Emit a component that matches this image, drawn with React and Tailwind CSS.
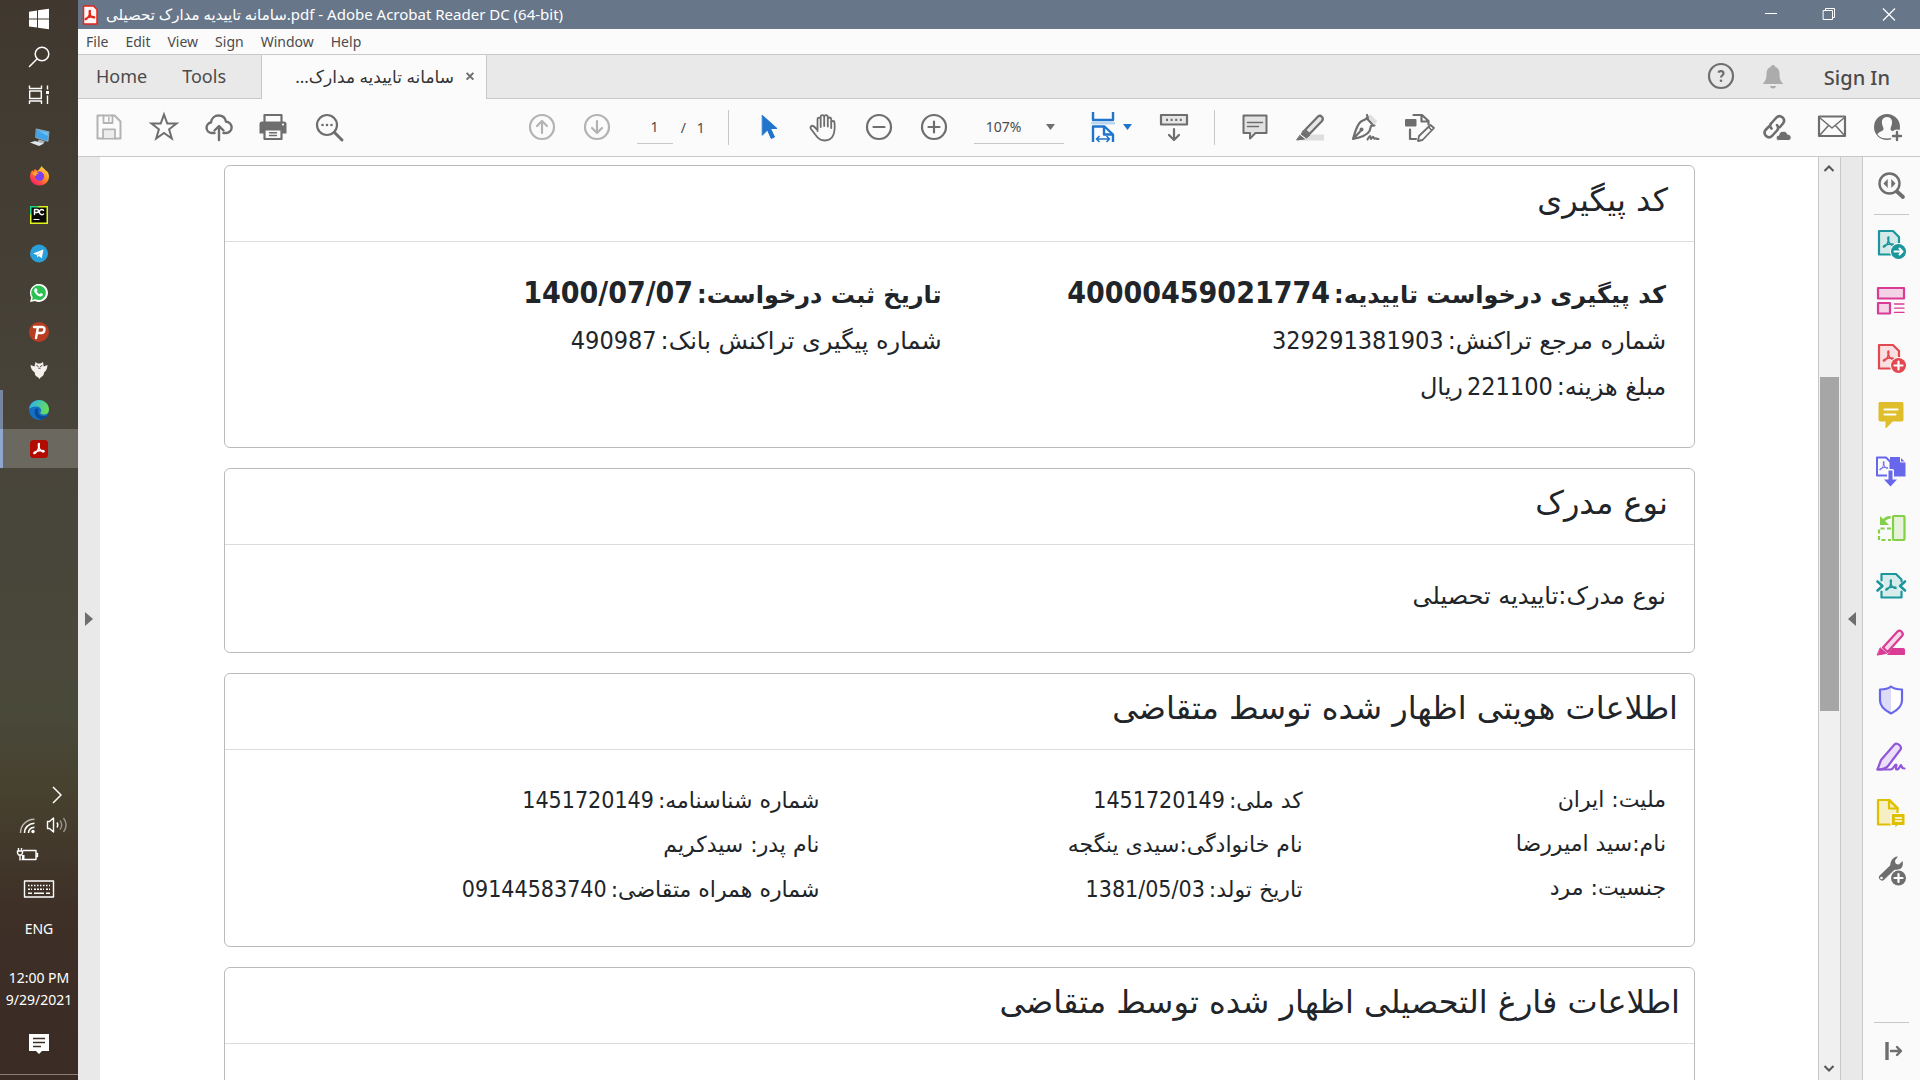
import React from "react";

const UI = "font-['Noto_Sans','DejaVu_Sans',sans-serif]";
const DOC = "font-['DejaVu_Sans',sans-serif]";

function Icon({ children, size = 32, className = "", ...rest }) {
  return (
    <svg
      width={size}
      height={size}
      viewBox="0 0 32 32"
      fill="none"
      stroke="currentColor"
      strokeWidth="2"
      strokeLinecap="round"
      strokeLinejoin="round"
      aria-hidden="true"
      className={"block shrink-0 " + className}
      {...rest}
    >
      {children}
    </svg>
  );
}

const Trefoil = ({ x = 0, y = 0, s = 1, color = "currentColor", w = 1.3 }) => (
  <path
    transform={`translate(${x} ${y}) scale(${s})`}
    d="M6 1c-.6 0-.9 1-.5 2.6C5.9 5.400 4.300 8.600 2.700 10.300c-1 1-2 1-1.900.3.200-.9 2.800-1.900 5.200-2.400 2-.4 5-.3 5.200.5.200.7-1.200.8-2.400.1C7 7.700 5.900 5.500 6.200 3.200 6.400 1.900 6.500 1 6 1z"
    stroke={color}
    strokeWidth={w}
    fill="none"
  />
);

/* ---------- taskbar ---------- */

const taskbarApps = [
  { name: "Start", icon: (
    <Icon stroke="none" fill="#fff">
      <path d="M6 7.700l8-1.200v8H6zM15 6.300L26 4.700v9.800H15zM6 15.600h8v8l-8-1.200zM15 15.600h11v9.700l-11-1.600z" />
    </Icon>
  ) },
  { name: "Search", icon: (
    <Icon stroke="#fff" strokeWidth="1.500">
      <circle cx="19" cy="11" r="6.800" />
      <path d="M14 16l-7.500 7.500" />
    </Icon>
  ) },
  { name: "Task View", icon: (
    <Icon stroke="#fff" strokeWidth="1.400" strokeLinecap="butt">
      <path d="M6.500 3.500v3h12v-3M6.500 22v-3h12v3M6.700 9h11.600v7.500H6.700zM24.500 3.500v4M24.500 13.500v8.500" />
      <rect x="23" y="9" width="3" height="3" fill="#fff" stroke="none" />
    </Icon>
  ) },
  { name: "This PC", icon: (
    <Icon stroke="none">
      <path d="M13.500 8L26 10.800l-1 9.600-12-3.800z" fill="#3fa5ea" stroke="#9fb3c2" strokeWidth=".8" />
      <path d="M14.500 9.200l10.500 2.300-.4 3.500z" fill="#6cc0f5" />
      <path d="M16 18.500l6 2-2 2-5.500-1.700z" fill="#aab6bd" />
      <path d="M7 21.500l5-1.500 9 2.500-5 2.500z" fill="#dfe7eb" />
    </Icon>
  ) },
  { name: "Firefox", icon: (
    <Icon stroke="none">
      <defs>
        <linearGradient id="ff" x1="24" y1="7" x2="9" y2="25" gradientUnits="userSpaceOnUse">
          <stop offset="0" stopColor="#ffe14a" />
          <stop offset=".45" stopColor="#ff8a24" />
          <stop offset=".8" stopColor="#ff3750" />
          <stop offset="1" stopColor="#e5188a" />
        </linearGradient>
      </defs>
      <path d="M18.500 6c1 2 3 2.700 4.200 4.500C25 11.500 26 14 26 16.500c0 5-4 9-9.500 9S7 21.500 7 16.500c0-3 1-5 2.500-6.500l.5 1.500c1-.6 1.600-1.700 1.800-2.500 1 .8 1.700 1.500 2.700 2 1.500-1.500 3-3 4-5z" fill="url(#ff)" />
      <circle cx="16.500" cy="16.200" r="4.600" fill="#7a3ff0" />
      <path d="M9.500 12.500c2-1 5-.5 6.500 1-1.800.2-2.700 1-3 2.500-2-.3-3.500-1.500-3.500-3.500z" fill="#ffa52b" />
    </Icon>
  ) },
  { name: "PyCharm", icon: (
    <Icon stroke="none">
      <rect x="7" y="7" width="18" height="18" fill="#dff41b" />
      <path d="M7 7h9l-9 9z" fill="#21d789" />
      <rect x="8.500" y="8.500" width="15" height="15" fill="#0a0a0a" />
      <path d="M11.500 15.500v-5H14a1.500 1.500 0 010 3h-2.500M20.500 11.200a2.500 2.500 0 100 3.700" stroke="#fff" strokeWidth="1.400" />
      <path d="M11 20.500h5" stroke="#fff" strokeWidth="1.200" />
    </Icon>
  ) },
  { name: "Telegram", icon: (
    <Icon stroke="none">
      <circle cx="16" cy="15.500" r="9" fill="#2a9fda" />
      <path d="M10 15.500l10.500-4-1.700 8.700-3-2.200-1.500 1.500-.4-2.500z" fill="#fff" />
      <path d="M14 17l4.500-3.500-3.500 4z" fill="#a9c9dd" />
    </Icon>
  ) },
  { name: "WhatsApp", icon: (
    <Icon stroke="none">
      <path d="M7 25l1.200-4.500A9 9 0 1112 24z" fill="#fff" />
      <path d="M9 23l.8-2.700A7.300 7.300 0 1112.200 22.300z" fill="#2bc052" />
      <path d="M12.500 11.200l1.300.2.8 2-.9 1.200c.7 1.300 1.700 2.100 3 2.700l1.200-1.200 2 1c.2 1.300-1 2.500-2.500 2.400-3.300-.5-6-3.500-6.200-6 0-1 .6-2 1.300-2.300z" fill="#fff" />
    </Icon>
  ) },
  { name: "Psiphon", icon: (
    <Icon stroke="none">
      <circle cx="16" cy="16" r="10" fill="#b93d22" />
      <path d="M11 11h8.500c3 0 2.500 6-1 6H15M15 11l-2 11" stroke="#fff" strokeWidth="2.400" />
    </Icon>
  ) },
  { name: "Owl", icon: (
    <Icon stroke="none">
      <path d="M12.500 7l2 1.500h3L20 7l.7 4.500L24.500 10c-.2 3.500-1 5.500-3.500 7.500.2 2.500-1.500 4-3.200 4.700L16.500 24l-1.500-1.800c-2-.7-3.500-2.200-3.200-4.700C9 15.500 7.700 13.500 7.500 10l4 1.500z" fill="#f4f1ec" />
      <path d="M13.700 10.500l1.500 1M19 10.500l-1.500 1M15.700 13.200h1.500" stroke="#48443a" strokeWidth="1" />
    </Icon>
  ) },
  { name: "Edge", running: true, icon: (
    <Icon stroke="none">
      <defs>
        <linearGradient id="edgeTop" x1="8" y1="8" x2="26" y2="16" gradientUnits="userSpaceOnUse">
          <stop offset="0" stopColor="#2fb4e8" />
          <stop offset="1" stopColor="#6de04a" />
        </linearGradient>
      </defs>
      <circle cx="16" cy="16" r="10" fill="#1370c4" />
      <path d="M6 15C6.700 9.500 11 6 16 6c6 0 10 4.500 10 9.500 0 3-2.300 5-5.200 5-2.600 0-4-1-3.300-2 1.400-1.800.7-5.500-3.500-6-3.500-.4-6.500 1-8 2.500z" fill="url(#edgeTop)" />
      <path d="M12.500 15c-2 3-1 8.500 5.500 10.500 3-.5 5.300-2 6.700-4.200-3 1.500-8.700 1.500-9.700-2.800-.3-1.500.2-2.500.7-3.200-1-.9-2.200-1-3.200-.3z" fill="#0b4a96" />
    </Icon>
  ) },
  { name: "Adobe Acrobat Reader", active: true, icon: (
    <Icon stroke="none">
      <rect x="7" y="7" width="18" height="18" rx="3.500" fill="#b30b00" />
      <Trefoil x={10} y={9.5} color="#fff" w={1.4} />
    </Icon>
  ) },
];

function Taskbar() {
  return (
    <aside className="flex w-[78px] shrink-0 flex-col bg-[linear-gradient(180deg,#40382e_0%,#48443a_40%,#49493a_66%,#47412f_73%,#3e3027_84%,#3a2c25_100%)] text-white">
      <nav aria-label="Taskbar" className="flex flex-col">
        {taskbarApps.map((a) => (
          <button
            key={a.name}
            aria-label={a.name}
            className={
              "flex h-[39px] items-center justify-center border-l-[3px] pr-[3px] " +
              (a.active
                ? "border-[#8fa7cf] bg-[#6b685f]"
                : a.running
                ? "border-[#76869f]"
                : "border-transparent")
            }
          >
            {a.icon}
          </button>
        ))}
      </nav>
      <div className="mt-auto flex flex-col items-center">
        <div className="flex h-[30px] w-full items-center justify-end pr-[5px]">
          <button aria-label="Show hidden icons">
            <Icon stroke="#fff" strokeWidth="1.500" strokeLinecap="butt"><path d="M12 8l8 8-8 8" /></Icon>
          </button>
        </div>
        <div className="flex h-[30px] w-full items-center pl-[11px]">
          <button aria-label="Network">
            <Icon stroke="#fff" strokeWidth="1.500" strokeLinecap="butt">
              <circle cx="22" cy="22.500" r="1.700" fill="#fff" stroke="none" />
              <path d="M17.500 24c0-3.500 2.500-5.500 6-5.800M13.500 24c0-5.500 4.500-9.500 10-9.700" />
              <path d="M9.500 24c0-8 6-13.500 14-13.700" stroke="#bdbab2" />
            </Icon>
          </button>
          <button aria-label="Volume" className="-ml-[3px]">
            <Icon stroke="#fff" strokeWidth="1.400" strokeLinecap="butt">
              <path d="M7.500 12.500h2l4-3.500v14l-4-3.500h-2z" />
              <path d="M17 13.500c1 1.500 1 3.500 0 5" />
              <path d="M20 11.500c2.300 3 2.300 6 0 9M23.500 9c3.300 4.500 3.300 9.500 0 14" stroke="#99958c" />
            </Icon>
          </button>
        </div>
        <div className="flex h-[30px] w-full items-center pl-[11px]">
          <Icon stroke="#fff" strokeWidth="1.400" strokeLinecap="butt">
            <path d="M12 11.500h13v9H10.500M25 14.500h1.500v3H25" />
            <path d="M7.500 9v3M10.500 9v3M6.500 12h5v2l-1 2h-3l-1-2zM9 16v5.500" />
            <rect x="11" y="16" width="2.500" height="4" fill="#fff" stroke="none" />
          </Icon>
        </div>
        <button aria-label="Touch keyboard" className="flex h-[38px] items-center">
          <Icon stroke="#fff" strokeWidth="1.400" strokeLinecap="butt">
            <rect x="1.500" y="8" width="29" height="16" />
            <path d="M5 12.500h22" strokeDasharray="1.500 1.500" />
            <path d="M5 16.300h4M11 16.300h10M23 16.300h4" strokeDasharray="2 1" />
            <path d="M5 20.200h4M11 20.200h10M23 20.200h4" />
          </Icon>
        </button>
        <button className={UI + " h-[42px] text-[14px] leading-[20px]"}>ENG</button>
        <div className={UI + " mt-[17px] text-center text-[14px] leading-[22px] whitespace-nowrap"}>
          <div>12:00 PM</div>
          <div>9/29/2021</div>
        </div>
        <button aria-label="Notifications" className="mt-[17px] mb-[14px]">
          <Icon stroke="none">
            <path d="M6 6h20v17h-7l-3 3-3-3H6z" fill="#fff" />
            <path d="M10 10.500h12M10 14.500h12M10 18.500h8" stroke="#3b2d26" strokeWidth="1.300" strokeLinecap="butt" />
          </Icon>
        </button>
        <div className="mb-[5px] h-px w-full bg-[#8a807b]" />
      </div>
    </aside>
  );
}

/* ---------- window chrome ---------- */

function TitleBar() {
  return (
    <header className={UI + " flex h-[29px] items-center bg-[#68768a] pl-1 text-[15px] text-white"}>
      <Icon size={16} stroke="none" viewBox="0 0 16 20" className="h-5">
        <path d="M1.500 1h10L15 4.500V19H1.500z" fill="#fff5f4" stroke="#e1251b" strokeWidth="1.500" />
        <Trefoil x={2.5} y={4.5} s={0.9} color="#e1251b" w={1.700} />
      </Icon>
      <h1 className="ml-2 whitespace-nowrap">
        سامانه تاییدیه مدارک تحصیلی.pdf - Adobe Acrobat Reader DC (64-bit)
      </h1>
      <div className="ml-auto flex">
        <button aria-label="Minimize" className="flex w-[58px] justify-center">
          <Icon stroke="#fff" strokeWidth="1" strokeLinecap="butt"><path d="M10 14.500h12" /></Icon>
        </button>
        <button aria-label="Restore" className="flex w-[58px] justify-center">
          <Icon stroke="#fff" strokeWidth="1" strokeLinejoin="miter"><path d="M10.500 11.500h9v9h-9zM12.500 11v-1.500h9v9H20" /></Icon>
        </button>
        <button aria-label="Close" className="flex w-[62px] justify-center">
          <Icon stroke="#fff" strokeWidth="1.200" strokeLinecap="butt"><path d="M10 9.500l12 12M22 9.500l-12 12" /></Icon>
        </button>
      </div>
    </header>
  );
}

function MenuBar() {
  return (
    <nav className={UI + " flex h-[26px] items-center gap-[17px] border-b border-[#c8c8c8] bg-[#fbfbfb] pl-2 text-[14px] text-[#4b4b4b]"}>
      {["File", "Edit", "View", "Sign", "Window", "Help"].map((m) => (
        <button key={m}>{m}</button>
      ))}
    </nav>
  );
}

function TabBar() {
  return (
    <div className={UI + " flex h-11 bg-[#e9e9e9] text-[18px] text-[#4b4b4b]"}>
      <div className="flex w-[183px] items-center gap-[35px] border-b border-[#c8c8c8] pl-[18px]">
        <button>Home</button>
        <button>Tools</button>
      </div>
      <div className="flex w-[226px] items-center justify-end border-x border-[#c8c8c8] bg-[#fbfbfb] pr-1">
        <span dir="rtl" className="text-[17px] whitespace-nowrap text-[#333]">سامانه تاییدیه مدارک...</span>
        <button aria-label="Close tab" className="ml-1">
          <Icon size={24} stroke="#6e6e6e" strokeWidth="2.700" strokeLinecap="butt"><path d="M11.500 10.500l9 9M20.500 10.500l-9 9" /></Icon>
        </button>
      </div>
      <div className="flex flex-1 items-center justify-end border-b border-[#c8c8c8] pr-[30px]">
        <button aria-label="Help" className="mr-[20px]">
          <Icon stroke="#6e6e6e" strokeWidth="2.200">
            <circle cx="16" cy="15" r="12" />
            <path d="M13.300 11.600c.6-2 5.200-2 5.200.8 0 1.800-2.500 1.900-2.500 4.200" strokeLinecap="butt" />
            <circle cx="16" cy="19.800" r="1.300" fill="#6e6e6e" stroke="none" />
          </Icon>
        </button>
        <button aria-label="Notifications" className="mr-[35px]">
          <Icon stroke="none">
            <path d="M16 4c1.300 0 2 .7 2 1.800 3 1 4.500 3.500 4.500 6.700 0 5 .8 7.500 4 10.500h-21c3.200-3 4-5.500 4-10.500 0-3.200 1.500-5.700 4.500-6.700 0-1.100.7-1.800 2-1.800z" fill="#acacac" />
            <path d="M13 25h6c-.5 1.800-1.500 2.500-3 2.500s-2.500-.7-3-2.500z" fill="#acacac" />
          </Icon>
        </button>
        <button className="pt-0.5 text-[20px] font-medium">Sign In</button>
      </div>
    </div>
  );
}

function ToolButton({ label, children, className = "" }) {
  return (
    <button aria-label={label} className={"flex w-[55px] shrink-0 justify-center text-[#6e6e6e] " + className}>
      <Icon>{children}</Icon>
    </button>
  );
}

const Divider = () => <div className="h-[35px] w-px shrink-0 bg-[#c8c8c8]" />;

function Toolbar() {
  return (
    <div className={UI + " flex h-[58px] items-center border-b border-[#c8c8c8] bg-[#fbfbfb] pb-px pl-[3px] text-[14px] text-[#4b4b4b]"}>
      <ToolButton label="Save">
        <g stroke="#b3b3b3">
          <path d="M4.500 4.500h17l6 6v17h-23z" />
          <path d="M10.500 4.500v7.500h9V4.500M10 27.500v-9h12v9" strokeWidth="1.800" />
          <path d="M15.800 6.500v3.500" strokeWidth="1.500" />
          <path d="M11 19.500h10v7.500H11z" fill="#ececec" stroke="none" />
        </g>
      </ToolButton>
      <ToolButton label="Add to favourites">
        <path d="M16 3.500l3.300 9h9.200l-7.400 5.800 2.700 9.200L16 22l-7.800 5.500 2.700-9.200-7.400-5.800h9.200z" strokeLinejoin="miter" />
      </ToolButton>
      <ToolButton label="Upload">
        <path d="M11.500 22H8.500a5.300 5.300 0 01-.6-10.500C8.500 7 12 4.500 15.500 4.500c4 0 6.800 2.500 7.600 6.300A5.600 5.600 0 0123 22h-2.500" strokeWidth="2.400" />
        <path d="M16 29V15.500M11.500 19.500L16 15l4.500 4.500" strokeWidth="2.400" />
      </ToolButton>
      <ToolButton label="Print">
        <path d="M6.500 11V4h17v7" strokeWidth="2.200" />
        <path d="M1.500 13c0-1.500 1-2.500 2.500-2.500h22c1.500 0 2.500 1 2.500 2.500v9.500h-5V18h-17v4.500h-5z" fill="currentColor" stroke="none" />
        <path d="M6.500 18.500h17v9.500h-17z" fill="#fbfbfb" strokeWidth="2.200" />
        <path d="M11.500 21.800h7M11.500 24.500h7" strokeWidth="1.400" />
        <circle cx="25" cy="13.500" r="1.100" fill="#fbfbfb" stroke="none" />
      </ToolButton>
      <ToolButton label="Find">
        <circle cx="14" cy="14" r="10" strokeWidth="2.200" />
        <path d="M21.500 21.500l7.500 7.500" strokeWidth="3" />
        <g fill="currentColor" stroke="none"><circle cx="9.500" cy="14" r="1.300" /><circle cx="14" cy="14" r="1.300" /><circle cx="18.500" cy="14" r="1.300" /></g>
      </ToolButton>

      <div className="flex-[10]" />

      <ToolButton label="Previous page">
        <g stroke="#b3b3b3" strokeWidth="2.200"><circle cx="16" cy="16" r="12" /><path d="M16 22V10.500M11 15l5-5 5 5" /></g>
      </ToolButton>
      <ToolButton label="Next page">
        <g stroke="#b3b3b3" strokeWidth="2.200"><circle cx="16" cy="16" r="12" /><path d="M16 10v11.500M11 17l5 5 5-5" /></g>
      </ToolButton>
      <input aria-label="Page number" defaultValue="1" className="ml-3 h-[34px] w-9 shrink-0 border-b border-[#c8c8c8] bg-transparent text-center outline-none" />
      <span className="ml-2 w-[47px] shrink-0 whitespace-pre">/   1</span>
      <Divider />
      <ToolButton label="Select" className="ml-[13px]">
        <path d="M9.500 4.500l14.500 13h-6.500l4 8.500-3.300 1.500-3.700-8.500-5 5z" fill="#1f74cc" stroke="#1f74cc" strokeWidth="1" />
      </ToolButton>
      <ToolButton label="Pan">
        <path d="M9.500 20V8.500c0-2.500 3-2.500 3.200 0V16M12.700 15V6c0-2.600 3.300-2.600 3.500 0v9M16.200 6c.2-2.500 3.400-2.500 3.600 0v9.500M19.800 8c.3-2 3.200-2 3.400 0v9M23.200 11.500c.3-2 3.300-2 3.300 0 0 0 .7 7.500-1 12-1.500 4-4.500 6-9 6-4 0-6.500-2-8.500-5L3 18c-1.500-2.500 1-4.200 3-2.500l3.500 3.500" strokeWidth="1.800" />
      </ToolButton>
      <ToolButton label="Zoom out">
        <g strokeWidth="2.200"><circle cx="16" cy="16" r="12" /><path d="M10.500 16h11" /></g>
      </ToolButton>
      <ToolButton label="Zoom in">
        <g strokeWidth="2.200"><circle cx="16" cy="16" r="12" /><path d="M10.500 16h11M16 10.500v11" /></g>
      </ToolButton>
      <div className="ml-3 flex h-[34px] w-[90px] shrink-0 items-center border-b border-[#c8c8c8] pl-3">
        <select aria-label="Zoom level" defaultValue="107%" className="w-[56px] appearance-none bg-transparent outline-none">
          <option>107%</option>
        </select>
        <svg width="9" height="6" viewBox="0 0 9 6" aria-hidden="true" className="ml-[4px] shrink-0"><path d="M0 0h9L4.500 6z" fill="#6e6e6e" /></svg>
      </div>
      <button aria-label="Fit width" className="ml-[23px] flex shrink-0 items-center">
        <Icon stroke="#1f74cc" strokeWidth="2.400" strokeLinecap="butt">
          <path d="M6 1v8h20V1" />
          <path d="M4 11h24v2.500H4z" fill="#bcd6f0" stroke="none" />
          <path d="M6 31V15.500h11.500L26 23.500V31" />
          <path d="M17 15v8.500h9" />
          <path d="M9.500 28h13M12.500 25l-3 3 3 3M19.500 25l3 3-3 3" strokeWidth="1.600" />
        </Icon>
        <svg width="9" height="6" viewBox="0 0 9 6" aria-hidden="true" className="ml-1"><path d="M0 0h9L4.500 6z" fill="#1f74cc" /></svg>
      </button>
      <ToolButton label="Hide toolbar" className="ml-[15px]">
        <rect x="3" y="4" width="26" height="9.500" fill="#e6e6e6" strokeWidth="2.200" />
        <path d="M8 8.800h16" strokeDasharray="2 2.600" strokeLinecap="butt" strokeWidth="2.200" />
        <path d="M16 18v10M11 24l5 5 5-5" strokeWidth="2.200" />
      </ToolButton>
      <div className="ml-3"><Divider /></div>
      <ToolButton label="Add comment" className="ml-[13px]">
        <path d="M4.500 4.500h23v17.500h-11L11 27.500V22H4.500z" fill="#e2e2e2" />
        <path d="M8.500 11.500h15M8.500 15.500h11" strokeWidth="1.500" />
      </ToolButton>
      <ToolButton label="Highlight">
        <path d="M15 23.500h15v6H8z" fill="#dedede" stroke="none" />
        <path d="M11 19L24 5.500c2.500-2 6.500 1 4 4.500L15.500 23z" fill="#e6e6e6" strokeWidth="2.200" />
        <path d="M9.500 19.500l6 5-3 2.500-5-3.500zM6 24.500l4.500 3.500L3 29z" fill="currentColor" strokeWidth="1" />
      </ToolButton>
      <ToolButton label="Sign">
        <path d="M18.500 6l7 7 3-2.500-7-7z" fill="#dedede" stroke="none" />
        <path d="M18 4l1 3-7 3.500C8 13 5.500 23 4 28c5-1 14-3.500 16.500-8L22 15l3.500-.5M17.500 7l6 6.500M4.500 27.500l7.500-8" strokeWidth="2.200" />
        <circle cx="12.500" cy="18.500" r="2" fill="currentColor" stroke="none" />
        <path d="M18.500 28.500c1.500-3 3-4.500 3-2.500 0 3 1 2 2.300 0 .7-1 1 2.500 2.200 1.500.8-.7 1 .7 3.500.5" />
      </ToolButton>
      <ToolButton label="Edit PDF">
        <path d="M9.500 4h8.500l6.500 6v3.500M17.500 4.500v6h6.500M6 18.500V28h6" strokeWidth="2.200" />
        <rect x="1" y="8" width="11.500" height="7.500" rx="1" fill="currentColor" stroke="none" />
        <path d="M15 25L26.500 14l3.500 3-11.500 12-4.500 1z" fill="#fbfbfb" strokeWidth="1.800" />
        <path d="M25 16.500l2.500 2.500" strokeWidth="1.500" />
      </ToolButton>

      <div className="flex-[19]" />

      <ToolButton label="Share link">
        <path d="M13.500 17.500c-2-2-1.500-4 0-5.500l5-5.500c3.500-3.500 10 1 6.500 6l-3 3.500M19 14c1.500 2 1.500 4 0 5.500l-5 5.500c-4 3.500-9.500-1.500-6.500-6l4-4" transform="translate(-3 0)" strokeWidth="2.600" />
        <path d="M17.500 29.500c-3 0-3.500-5 .3-5.300.5-5.300 8-5 8.700-1 5 .3 4.500 6.300 1 6.300z" fill="currentColor" stroke="#fbfbfb" strokeWidth="1" />
      </ToolButton>
      <ToolButton label="Send by email">
        <rect x="3" y="5.500" width="26" height="19.500" strokeWidth="2.200" />
        <path d="M4 7l12 10 12-10M4 24l8.500-9.500M28 24L19.500 14.500" strokeWidth="1.500" />
      </ToolButton>
      <ToolButton label="Account" className="mr-[6px]">
        <circle cx="16" cy="16" r="13" fill="currentColor" stroke="none" />
        <path d="M16 6c4 0 5.500 3 5 6.500-.3 2.500-1.500 3.500-1.500 5.500 0 2.500 5 2.500 6 5.500C23 26.500 20 27.500 16 27.500S9 26.500 6.500 23.500c1-3 6-3 6-5.500 0-2-1.200-3-1.500-5.500C10.500 9 12 6 16 6z" fill="#fbfbfb" stroke="none" />
        <circle cx="26" cy="25" r="6.500" fill="#fbfbfb" stroke="none" />
        <path d="M26 21v8M22 25h8" strokeWidth="2.400" />
      </ToolButton>
    </div>
  );
}

/* ---------- document ---------- */

const fieldStyles = {
  strong: { row: "text-[24px] font-bold", value: "text-[30px]" },
  large: { row: "text-[24px]", value: "text-[25px]" },
  base: { row: "text-[22px]", value: "text-[23px]" },
};

function Field({ label, value, after, kind = "base" }) {
  const s = fieldStyles[kind];
  return (
    <p className={s.row}>
      <span>{label}</span>
      {value && (
        <bdi className={"mr-1 font-['DejaVu_Sans_Condensed','DejaVu_Sans',sans-serif] " + s.value}>{value}</bdi>
      )}
      {after && <span className="mr-1">{after}</span>}
    </p>
  );
}

function Card({ title, children, height, inset = "pr-[26px]" }) {
  return (
    <section className={"shrink-0 overflow-hidden rounded-md border border-[#b9bbbf] bg-white " + height}>
      <h2 className={"flex h-[76px] items-center border-b border-[#dcdcde] pb-2 text-[32px] whitespace-nowrap " + inset}>{title}</h2>
      {children}
    </section>
  );
}

function Document() {
  return (
    <main dir="rtl" lang="fa" className={DOC + " min-w-0 flex-1 overflow-hidden bg-white pt-2 pr-[123px] pl-[124px] text-[#212529]"}>
      <div className="flex flex-col gap-5">
        <Card title="کد پیگیری" height="h-[283px]">
          <div className="grid grid-cols-2 pt-7 leading-[46px] whitespace-nowrap">
            <div className="pr-[28px]">
              <Field kind="strong" label="کد پیگیری درخواست تاییدیه:" value="40000459021774" />
              <Field kind="large" label="شماره مرجع تراکنش:" value="329291381903" />
              <Field kind="large" label="مبلغ هزینه:" value="221100" after="ریال" />
            </div>
            <div className="pr-[18px]">
              <Field kind="strong" label="تاریخ ثبت درخواست:" value="1400/07/07" />
              <Field kind="large" label="شماره پیگیری تراکنش بانک:" value="490987" />
            </div>
          </div>
        </Card>
        <Card title="نوع مدرک" height="h-[185px]">
          <div className="pt-7 pr-[28px] leading-[46px]">
            <Field kind="large" label="نوع مدرک:تاییدیه تحصیلی" />
          </div>
        </Card>
        <Card title="اطلاعات هویتی اظهار شده توسط متقاضی" height="h-[274px]" inset="pr-[16px]">
          <div className="grid grid-cols-[3fr_4fr_5fr] pt-7 pr-[28px] leading-[44px] whitespace-nowrap">
            <div>
              <Field label="ملیت: ایران" />
              <Field label="نام:سید امیررضا" />
              <Field label="جنسیت: مرد" />
            </div>
            <div className="pr-[3px]">
              <Field label="کد ملی:" value="1451720149" />
              <Field label="نام خانوادگی:سیدی ینگجه" />
              <Field label="تاریخ تولد:" value="1381/05/03" />
            </div>
            <div className="pr-[6px]">
              <Field label="شماره شناسنامه:" value="1451720149" />
              <Field label="نام پدر: سیدکریم" />
              <Field label="شماره همراه متقاضی:" value="09144583740" />
            </div>
          </div>
        </Card>
        <Card title="اطلاعات فارغ التحصیلی اظهار شده توسط متقاضی" height="h-[283px]" inset="pr-[14px]" />
      </div>
    </main>
  );
}

function ScrollBar() {
  return (
    <div className="flex w-[23px] shrink-0 flex-col items-center border-x border-[#c8c8c8] bg-[#f0f0f0] pr-px">
      <button aria-label="Scroll up" className="flex h-[22px] items-center">
        <svg width="12" height="8" viewBox="0 0 12 8" fill="none" aria-hidden="true"><path d="M1.500 7L6 2.500 10.500 7" stroke="#555" strokeWidth="2" /></svg>
      </button>
      <div className="flex w-full flex-1 flex-col pl-px">
        <div className="flex-[198]" />
        <div className="flex-[334] bg-[#a6a6a6]" />
        <div className="flex-[347]" />
      </div>
      <button aria-label="Scroll down" className="flex h-[22px] items-center">
        <svg width="12" height="8" viewBox="0 0 12 8" fill="none" aria-hidden="true"><path d="M1.500 1L6 5.500 10.500 1" stroke="#555" strokeWidth="2" /></svg>
      </button>
    </div>
  );
}

/* ---------- tools pane ---------- */

const Page = ({ c, f }) => (
  <g>
    <path d="M4 3h14l6 6v17.500H4z" fill={f} stroke={c} strokeWidth="2.200" />
    <Trefoil x={7.5} y={8} s={1} color={c} w={1.400} />
  </g>
);

const tools = [
  ["Export PDF", (
    <>
      <Page c="#1a969c" f="#d3e9ea" />
      <circle cx="23.500" cy="23.500" r="8.500" fill="#fafafa" stroke="none" />
      <circle cx="23.500" cy="23.500" r="7.500" fill="#1a969c" stroke="none" />
      <path d="M19.500 23.500h7.500M24.500 20.500l3 3-3 3" stroke="#fff" />
    </>
  )],
  ["Organize Pages", (
    <g stroke="#da3b96" strokeWidth="2.200">
      <rect x="3" y="3" width="26" height="10.500" fill="#f4d3e6" />
      <rect x="3" y="18" width="12" height="10.500" fill="#f4d3e6" />
      <path d="M19.500 19h9.500M19.500 23.200h9.500M19.500 27.400h9.500" strokeWidth="1.300" />
    </g>
  )],
  ["Create PDF", (
    <>
      <Page c="#e34850" f="#fadfe0" />
      <circle cx="23.500" cy="23.500" r="8.500" fill="#fafafa" stroke="none" />
      <circle cx="23.500" cy="23.500" r="7.500" fill="#e34850" stroke="none" />
      <path d="M19.500 23.500h8M23.500 19.500v8" stroke="#fff" strokeWidth="2.200" />
    </>
  )],
  ["Comment", (
    <>
      <path d="M5 3.500h22c.6 0 1 .4 1 1V21c0 .6-.4 1-1 1h-9.500L11 29v-7H5c-.6 0-1-.4-1-1V4.500c0-.6.400-1 1-1z" fill="#dfbe2a" stroke="#dfbe2a" strokeWidth="1" />
      <path d="M9.500 10.500h13M9.500 15.500h11" stroke="#fff" />
    </>
  )],
  ["Combine Files", (
    <>
      <path d="M15 1h10l5.500 5.500v14H15z" fill="#6767ec" stroke="none" />
      <path d="M25.500.500V6h5.500" stroke="#fafafa" strokeWidth="1" />
      <path d="M2 1.500h9L15.500 6v13.500H2z" fill="#fafafa" stroke="#6767ec" />
      <Trefoil x={4} y={5} s={0.8} color="#6767ec" w={1.200} />
      <path d="M13.500 14.500h4v9H22l-6.500 7L9 23.500h4.500z" fill="#6767ec" stroke="#fafafa" strokeWidth="3" />
      <path d="M13.500 14.500h4v9H22l-6.500 7L9 23.500h4.500z" fill="#6767ec" stroke="none" />
    </>
  )],
  ["Rotate", (
    <g stroke="#84d049" strokeWidth="2.200" strokeLinecap="butt">
      <rect x="18" y="3" width="11.500" height="24" rx="1" fill="#e6f2da" />
      <path d="M16 15.500H4V27h12" strokeDasharray="4 2.500" />
      <path d="M15.500 4.500c-3.500-.5-5.500 1.500-8 4" strokeWidth="2.800" />
      <path d="M5 3v9h9z" fill="#84d049" stroke="none" />
    </g>
  )],
  ["Compress PDF", (
    <>
      <path d="M7.500 5H21l4.500 5v5.500L23 16l2.500 5v6h-18v-6l2.500-5-2.500-5z" fill="#d9ecec" stroke="none" />
      <path d="M6.500 10.500V4H21l5.500 5.500v2M6.500 21.500v6h20v-6" fill="none" stroke="#1a969c" strokeWidth="2.200" />
      <Trefoil x={10} y={9} s={1} color="#1a969c" w={1.400} />
      <path d="M2.500 11.500l5 4.500-5 4.500M30 11.500L25 16l5 4.500" stroke="#1a969c" strokeWidth="2.600" />
    </>
  )],
  ["Redact", (
    <>
      <path d="M17 21.500h11.500c.6 0 1 .4 1 1v5H13z" fill="#da3b96" stroke="#da3b96" strokeWidth="1" />
      <path d="M8 20.500L22.500 4.500c2.500-2.500 7 1.500 4.500 4.500L12.500 25z" fill="#f6d9e9" stroke="#da3b96" strokeWidth="2.200" />
      <path d="M5.500 21L11.500 26.500 2.500 28z" fill="#da3b96" stroke="#da3b96" strokeWidth="1" />
    </>
  )],
  ["Protect", (
    <>
      <path d="M16 2.500c3 2.500 6.500 3 11 3v11c0 6-5 10-11 13z" fill="#fff" stroke="none" />
      <path d="M16 2.500c-3 2.500-6.500 3-11 3v11c0 6 5 10 11 13z" fill="#dcdcf9" stroke="none" />
      <path d="M16 2.500c3 2.500 6.500 3 11 3v11c0 6-5 10-11 13-6-3-11-7-11-13v-11c4.500 0 8-.5 11-3z" stroke="#6767ec" strokeWidth="2.200" />
    </>
  )],
  ["Fill & Sign", (
    <g stroke="#9256d9" strokeWidth="2.200">
      <path d="M2.500 28.500L6 19 19.500 3.500c2.500-2.500 8 2 6 5L13 25c-2 2.500-6 3.500-10.500 3.500z" fill="#ecdff8" />
      <path d="M2.500 28.500h13c3 0 4-5 5.500-5s-1.500 5 1 5 3-4.500 4-4.500-.5 3.500 3.500 3.500" />
    </g>
  )],
  ["Send for Comments", (
    <>
      <path d="M3 2h11.500l8 8v16.500H3z" fill="#f6efc4" stroke="#dfc000" strokeWidth="2.200" />
      <path d="M14 2v8.500h8.500z" fill="#f6efc4" stroke="#dfc000" strokeWidth="2.200" />
      <path d="M16.500 15.500H30V27.500h-7.500L20 30.500v-3h-3.500z" fill="#dfc000" stroke="#fafafa" strokeWidth="1" />
      <path d="M20.500 20h6M20.500 23h6" stroke="#fff" strokeWidth="1.500" />
    </>
  )],
  ["More Tools", (
    <>
      <path d="M7 22.500L19 11" stroke="#6e6e6e" strokeWidth="6" />
      <path d="M23 1.500l-3 4 .5 3.500 3.500.5 3.500-3.500c1.500 5-1.500 9-6 9-5 0-7.500-4-5.500-8.500 1-3 4-5 7-5z" fill="#6e6e6e" stroke="none" />
      <circle cx="6.500" cy="23" r="1.300" fill="#fff" stroke="none" />
      <circle cx="23.500" cy="23" r="8.500" fill="#fafafa" stroke="none" />
      <circle cx="23.500" cy="23" r="7.500" fill="#6e6e6e" stroke="none" />
      <path d="M19.500 23h8M23.500 19v8" stroke="#fff" strokeWidth="2.200" />
    </>
  )],
];

function ToolsPane() {
  return (
    <aside className="flex w-[58px] shrink-0 flex-col items-center border-l border-[#c8c8c8] bg-[#fafafa] pr-px">
      <button aria-label="Search tools" className="flex h-[57px] items-center text-[#6e6e6e]">
        <Icon>
          <circle cx="14.500" cy="13.500" r="10" strokeWidth="2.400" />
          <path d="M22 21.500l6 5.500" strokeWidth="3.800" />
          <path d="M12.700 9v9L8.500 13.500zM16.300 9v9l4.200-4.500z" fill="currentColor" stroke="none" />
        </Icon>
      </button>
      <div className="h-px w-[35px] bg-[#c8c8c8]" />
      {tools.map(([name, art]) => (
        <button key={name} aria-label={name} className="flex h-[57px] items-center">
          <Icon className="overflow-visible">{art}</Icon>
        </button>
      ))}
      <div className="mt-auto h-px w-[35px] shrink-0 bg-[#c8c8c8]" />
      <button aria-label="Collapse pane" className="flex h-[57px] shrink-0 items-center pl-2 text-[#6e6e6e]">
        <Icon>
          <path d="M8 6v18" strokeWidth="3.400" strokeLinecap="butt" />
          <path d="M12 15h9.500M18 11l4 4-4 4" strokeWidth="2.400" />
        </Icon>
      </button>
    </aside>
  );
}

export default function App() {
  return (
    <div className="flex h-screen w-full overflow-hidden">
      <Taskbar />
      <div className="flex min-w-0 flex-1 flex-col">
        <TitleBar />
        <MenuBar />
        <TabBar />
        <Toolbar />
        <div className="flex min-h-0 flex-1">
          <button aria-label="Show navigation pane" className="flex w-[22px] shrink-0 items-center justify-center bg-[#e9e9e9]">
            <svg width="8" height="14" viewBox="0 0 8 14" aria-hidden="true"><path d="M0 0v14l8-7z" fill="#6e6e6e" /></svg>
          </button>
          <Document />
          <ScrollBar />
          <button aria-label="Hide tools pane" className="flex w-[21px] shrink-0 items-center justify-center bg-[#e9e9e9]">
            <svg width="8" height="14" viewBox="0 0 8 14" aria-hidden="true"><path d="M8 0v14L0 7z" fill="#6e6e6e" /></svg>
          </button>
          <ToolsPane />
        </div>
      </div>
    </div>
  );
}
